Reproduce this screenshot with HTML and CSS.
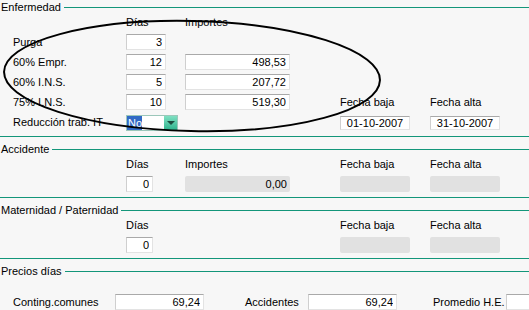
FILE: index.html
```html
<!DOCTYPE html>
<html lang="es">
<head>
    <meta charset="UTF-8">
    <title>Incapacidad temporal</title>
    <link rel="stylesheet" href="styles.css">
</head>
<body>
<div class="form">
    <section class="group first">
        <div class="legend">Enfermedad</div>
        <div class="grid">
            <span class="head c2">Días</span>
            <span class="head c3">Importes</span>

            <span class="label c1">Purga</span>
            <input class="field dias c2" type="text" value="3">

            <span class="label c1">60% Empr.</span>
            <input class="field dias c2" type="text" value="12">
            <input class="field imp c3" type="text" value="498,53">

            <span class="label c1">60% I.N.S.</span>
            <input class="field dias c2" type="text" value="5">
            <input class="field imp c3" type="text" value="207,72">

            <span class="label c1">75% I.N.S.</span>
            <input class="field dias c2" type="text" value="10">
            <input class="field imp c3" type="text" value="519,30">
            <span class="label c4">Fecha baja</span>
            <span class="label c5">Fecha alta</span>

            <span class="label c1">Reducción trab. IT</span>
            <div class="combo c2">
                <span class="combo-value">No</span>
                <span class="combo-btn"></span>
            </div>
            <input class="field date c4" type="text" value="01-10-2007">
            <input class="field date c5" type="text" value="31-10-2007">
        </div>
    </section>

    <section class="group">
        <div class="legend">Accidente</div>
        <div class="grid">
            <span class="head c2">Días</span>
            <span class="head c3">Importes</span>
            <span class="head c4">Fecha baja</span>
            <span class="head c5">Fecha alta</span>

            <input class="field short c2" type="text" value="0">
            <input class="field imp c3" type="text" value="0,00" disabled>
            <input class="field date c4" type="text" value="" disabled>
            <input class="field date c5" type="text" value="" disabled>
        </div>
    </section>

    <section class="group">
        <div class="legend">Maternidad / Paternidad</div>
        <div class="grid">
            <span class="head c2">Días</span>
            <span class="head c4">Fecha baja</span>
            <span class="head c5">Fecha alta</span>

            <input class="field short c2" type="text" value="0">
            <input class="field date c4" type="text" value="" disabled>
            <input class="field date c5" type="text" value="" disabled>
        </div>
    </section>

    <section class="group last">
        <div class="legend">Precios días</div>
        <div class="prices">
            <span class="label">Conting.comunes</span>
            <input class="field price" type="text" value="69,24">
            <span class="label">Accidentes</span>
            <input class="field price" type="text" value="69,24">
            <span class="label">Promedio H.E.</span>
            <input class="field price cut" type="text" value="">
        </div>
    </section>

    <!-- marca a mano alzada sobre el bloque de enfermedad -->
    <svg class="mark" width="529" height="150" viewBox="0 0 529 150">
        <ellipse cx="192" cy="76" rx="188" ry="55" transform="rotate(1.3 192 76)"
                 fill="none" stroke="#000" stroke-width="2"/>
    </svg>
</div>
</body>
</html>
```

FILE: styles.css
```css
* {
    margin: 0;
    padding: 0;
    box-sizing: border-box;
}

html, body {
    background: #f7f7f7;
}

body {
    font-family: "Liberation Sans", Arial, sans-serif;
    font-size: 11px;
    color: #000;
    overflow: hidden;
}

.form {
    position: relative;
    width: 529px;
    height: 310px;
    overflow: hidden;
}

.group {
    border-bottom: 1px solid #13967a;
    padding-bottom: 5px;
    margin-top: 5px;
}
.group.first {
    margin-top: 0;
    padding-bottom: 6px;
}
.group.last {
    border-bottom: none;
}

.legend {
    display: flex;
    align-items: center;
    gap: 3px;
    height: 14px;
    line-height: 14px;
    padding-left: 1px;
    white-space: nowrap;
}
.legend:after {
    content: '';
    flex: 1;
    height: 1px;
    background: #13967a;
}

.grid {
    display: grid;
    grid-template-columns: 113px 59px 155px 90px 1fr;
    grid-template-rows: 16px;
    grid-auto-rows: 16px;
    row-gap: 4px;
    padding-left: 13px;
}

.c1 { grid-column: 1; }
.c2 { grid-column: 2; }
.c3 { grid-column: 3; }
.c4 { grid-column: 4; }
.c5 { grid-column: 5; }

.head {
    align-self: start;
    padding-top: 2px;
    line-height: 13px;
}

.label {
    align-self: center;
    line-height: 13px;
    white-space: nowrap;
}

.field {
    height: 16px;
    font: inherit;
    color: #000;
    text-align: right;
    padding: 0 3px;
    background: #fff;
    border: 1px solid #e3e3e3;
    border-top-color: #a9a9a9;
    border-left-color: #cfcfcf;
    outline: none;
}
.field:disabled {
    background: #e1e1e1;
    border: none;
    border-radius: 2px;
    color: #000;
}

.dias { width: 40px; }
.short { width: 27px; }
.imp { width: 105px; }
.date {
    width: 70px;
    height: 14px;
    margin-top: 2px;
    text-align: center;
}
.date:disabled {
    height: 16px;
    margin-top: 0;
}
.price { width: 89px; }
.price.cut {
    width: 23px;
    border-right: none;
}

.combo {
    display: flex;
    width: 52px;
    height: 16px;
    margin-top: 1px;
    background: #fff;
    border: 1px solid #9cc7ba;
}
.combo-value {
    width: 15px;
    background: #316ac5;
    color: #fff;
    line-height: 14px;
    padding-left: 1px;
}
.combo-btn {
    position: relative;
    width: 13px;
    margin-left: auto;
    background: linear-gradient(#7fe0c2, #2fb38d);
}
.combo-btn:after {
    content: '';
    position: absolute;
    left: 3px;
    top: 5px;
    border-left: 4px solid transparent;
    border-right: 4px solid transparent;
    border-top: 4px solid #1d4d40;
}

.prices {
    display: grid;
    grid-template-columns: 102px 130px 63px 125px 73px 1fr;
    grid-auto-rows: 16px;
    align-items: center;
    margin-top: 16px;
    padding-left: 13px;
}

.mark {
    position: absolute;
    top: 0;
    left: 0;
    pointer-events: none;
}
```
